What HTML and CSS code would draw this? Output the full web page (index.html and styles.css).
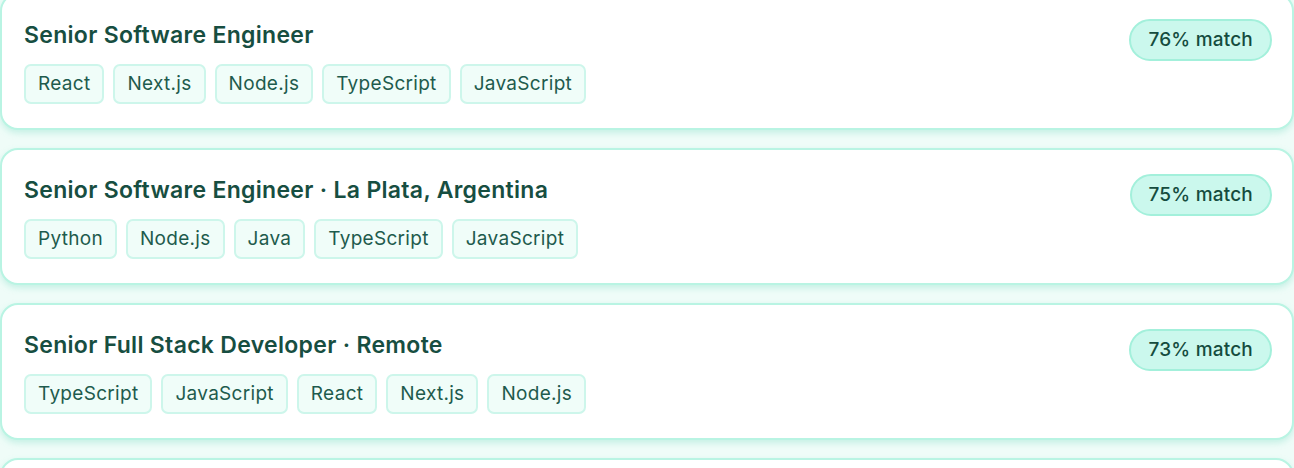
FILE: index.html
```html
<!DOCTYPE html>
<html>
<head>
    <title>Job matches</title>
    <link rel="stylesheet" href="styles.css">
</head>
<body>
    <div class="job-list">
        <div class="job-card">
            <div class="job-info">
                <h2 class="job-title">Senior Software Engineer</h2>
                <div class="tags">
                    <span class="tag">React</span>
                    <span class="tag">Next.js</span>
                    <span class="tag">Node.js</span>
                    <span class="tag">TypeScript</span>
                    <span class="tag">JavaScript</span>
                </div>
            </div>
            <span class="match">76% match</span>
        </div>
        <div class="job-card">
            <div class="job-info">
                <h2 class="job-title">Senior Software Engineer · La Plata, Argentina</h2>
                <div class="tags">
                    <span class="tag">Python</span>
                    <span class="tag">Node.js</span>
                    <span class="tag">Java</span>
                    <span class="tag">TypeScript</span>
                    <span class="tag">JavaScript</span>
                </div>
            </div>
            <span class="match">75% match</span>
        </div>
        <div class="job-card">
            <div class="job-info">
                <h2 class="job-title">Senior Full Stack Developer · Remote</h2>
                <div class="tags">
                    <span class="tag">TypeScript</span>
                    <span class="tag">JavaScript</span>
                    <span class="tag">React</span>
                    <span class="tag">Next.js</span>
                    <span class="tag">Node.js</span>
                </div>
            </div>
            <span class="match">73% match</span>
        </div>
        <div class="job-card job-card-empty"></div>
    </div>
</body>
</html>
```

FILE: styles.css
```css
body {
    font-family: 'Inter', 'Noto Sans', sans-serif;
    background-color: #effcf8;
    margin: 0;
    height: 468px;
    overflow: hidden;
}

.job-list {
    display: flex;
    flex-direction: column;
    gap: 18px;
    margin-top: -7px; /* list is scrolled a little */
}

.job-card {
    display: flex;
    justify-content: space-between;
    align-items: flex-start;
    background-color: #fff;
    border: 2px solid #b9f4e3;
    border-radius: 18px;
    padding: 26px 20px 24px 22px;
    box-shadow: 0 3px 6px rgba(120, 220, 195, 0.35);
}

.job-card-empty {
    height: 89px;
}

.job-title {
    margin: 0;
    font-size: 23px;
    line-height: 28px;
    font-weight: 600;
    color: #174e41;
    letter-spacing: 0.3px;
}

.tags {
    display: flex;
    gap: 9px;
    margin-top: 15px;
}

.tag {
    height: 36px;
    line-height: 36px;
    padding: 0 12px;
    font-size: 19px;
    letter-spacing: 0.3px;
    color: #1e5b4d;
    background-color: #f0fdf9;
    border: 2px solid #cdf6eb;
    border-radius: 7px;
}

.match {
    height: 38px;
    line-height: 38px;
    margin-top: -2px;
    padding: 0 17px;
    font-size: 19px;
    font-weight: 500;
    letter-spacing: 0.2px;
    color: #154c3e;
    background-color: #cbf8ed;
    border: 2px solid #a3f0db;
    border-radius: 21px;
}
```
